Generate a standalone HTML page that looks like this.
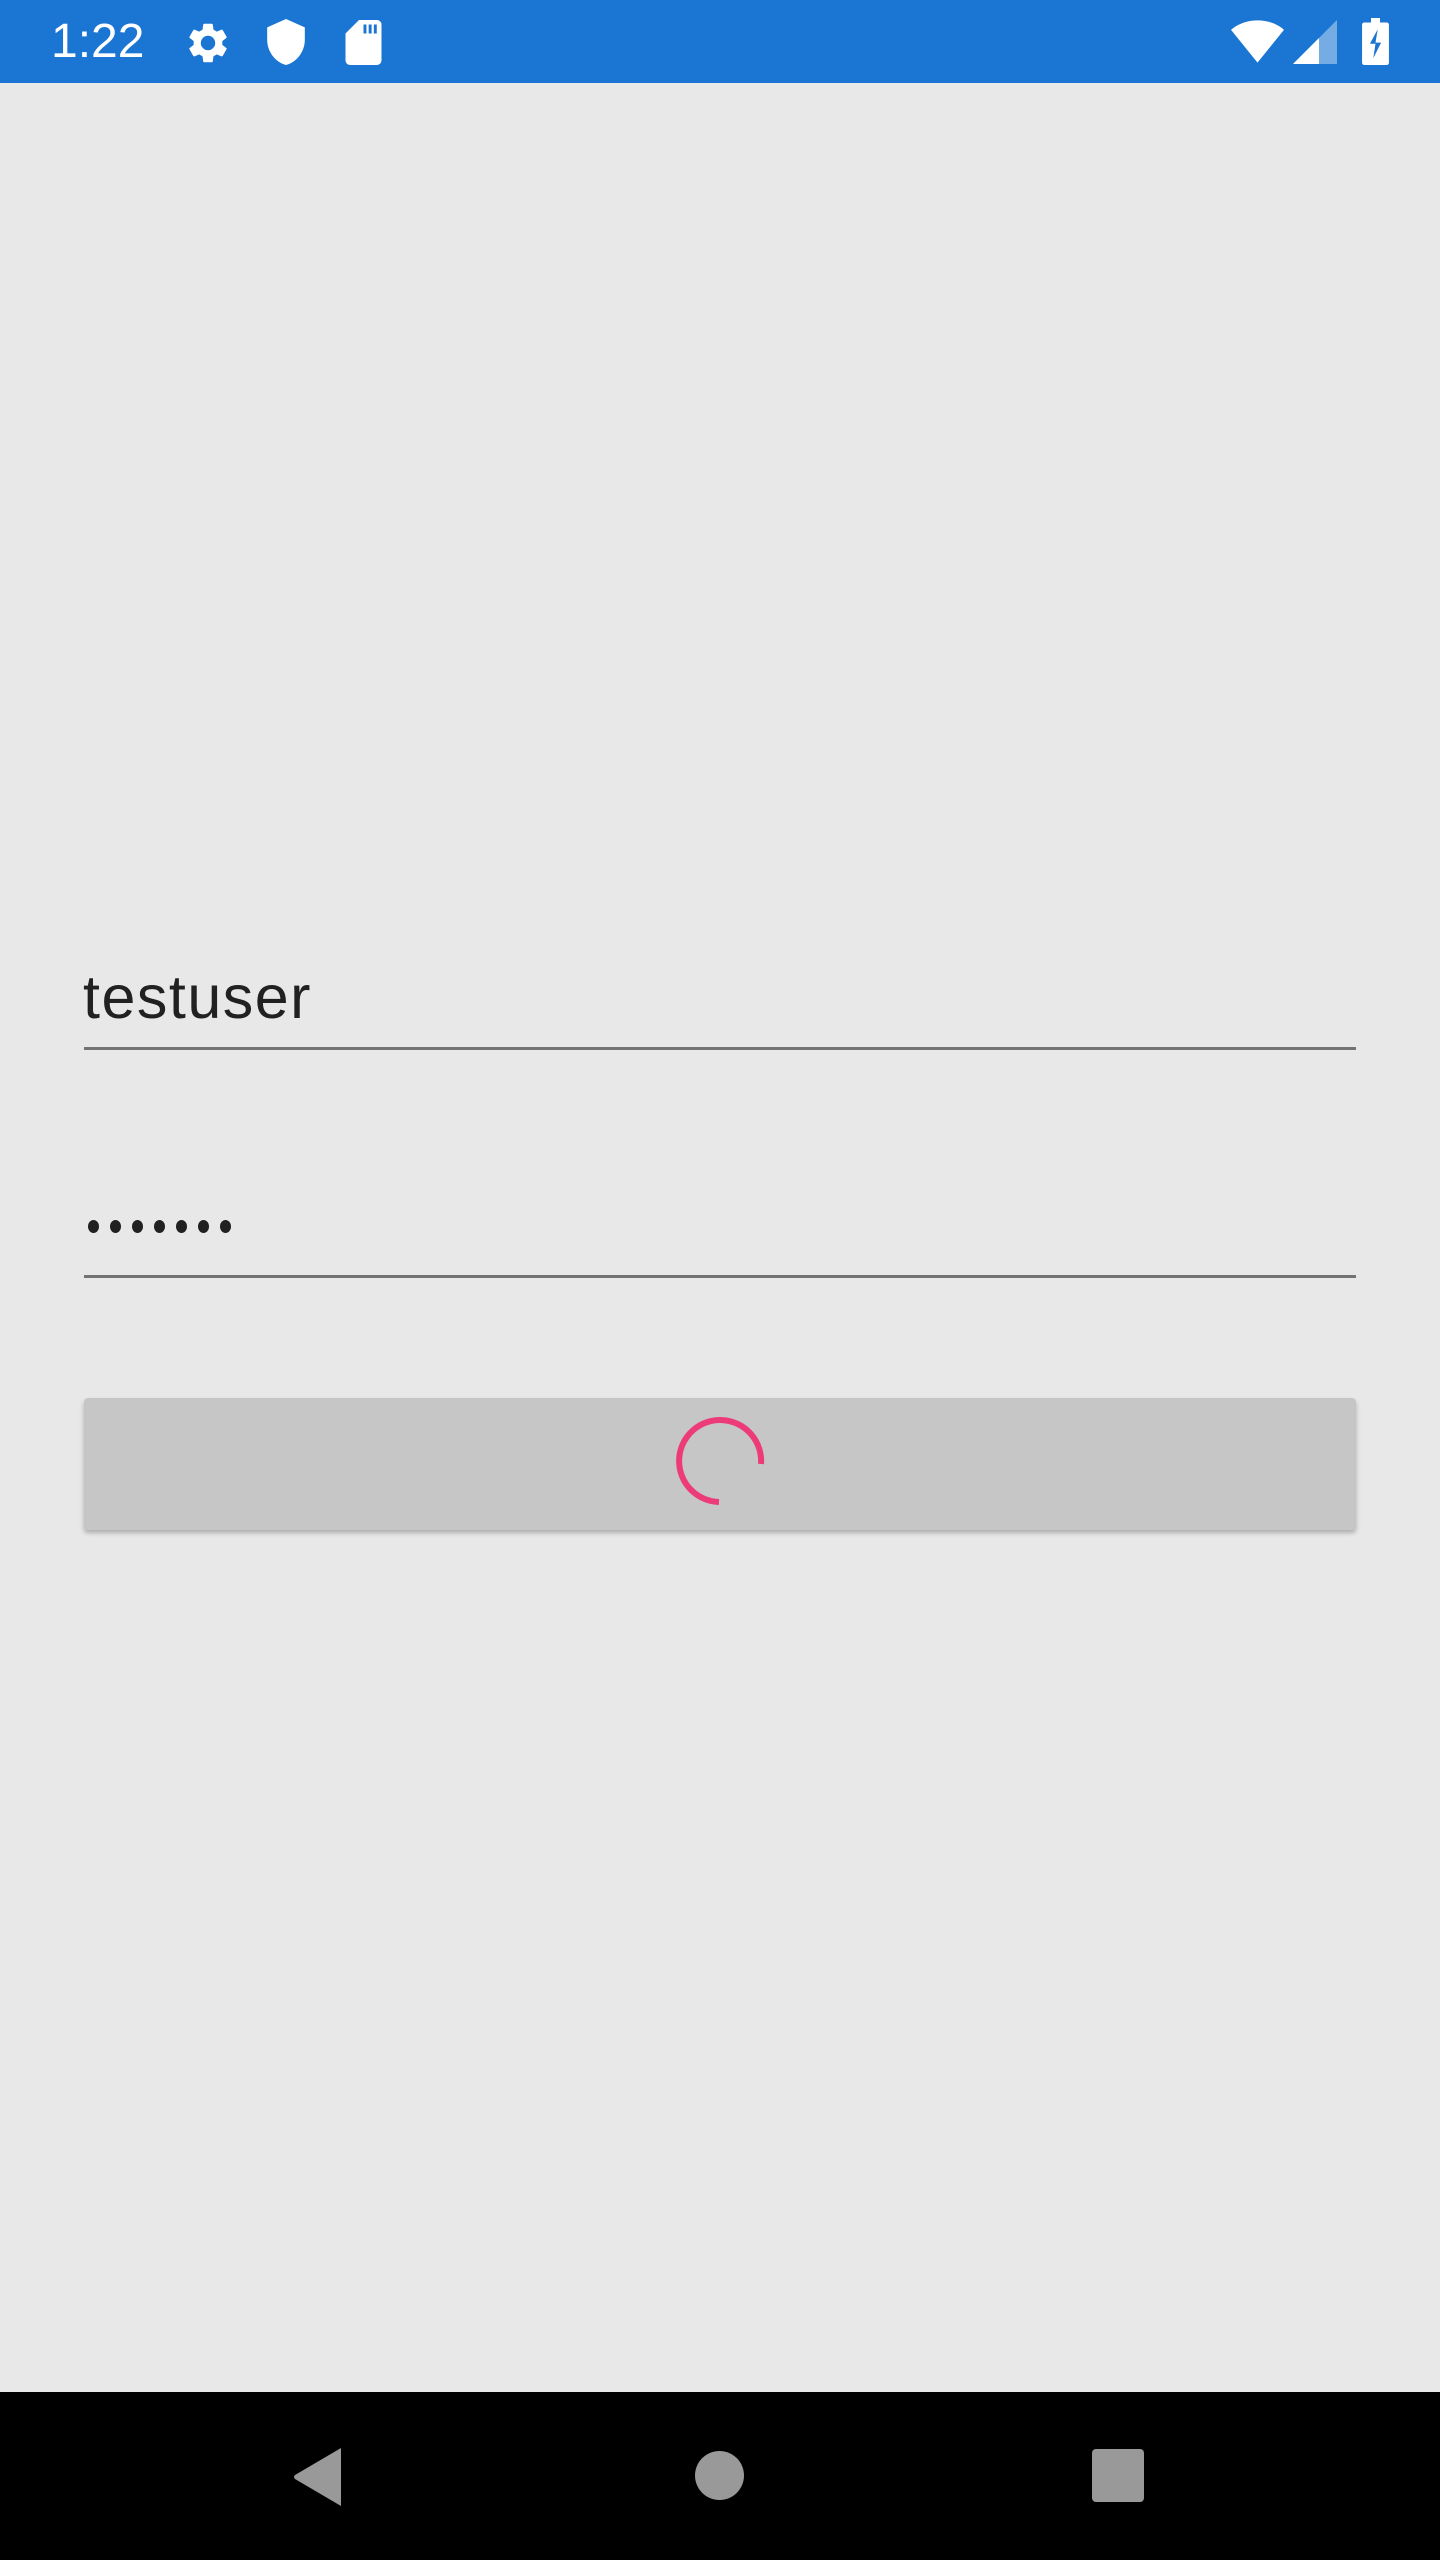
<!DOCTYPE html>
<html><head><meta charset="utf-8"><style>
html,body{margin:0;padding:0}
body{width:1440px;height:2560px;background:#e8e8e8;position:relative;overflow:hidden;font-family:"Liberation Sans",sans-serif}
.sb{position:absolute;left:0;top:0;width:1440px;height:83px;background:#1a76d2}
.abs{position:absolute}
.nav{position:absolute;left:0;top:2392px;width:1440px;height:168px;background:#000}
.d{position:absolute;top:1220px;width:11px;height:13px;border-radius:50%;background:#212121}
</style></head><body>
<div class="sb">
 <div class="abs" style="left:51px;top:12px;color:#fff;font-size:48px;line-height:60px">1:22</div>
 <svg class="abs" style="left:184px;top:19px" width="48" height="48" viewBox="0 0 24 24"><path fill="#fff" d="M19.14 12.94c.04-.3.06-.61.06-.94 0-.32-.02-.64-.07-.94l2.030-1.58a.49.49 0 0 0 .12-.61l-1.92-3.32a.49.49 0 0 0-.59-.22l-2.39.96c-.5-.38-1.03-.7-1.62-.94l-.36-2.540a.48.48 0 0 0-.48-.41h-3.84a.48.48 0 0 0-.47.41l-.36 2.54c-.59.24-1.13.57-1.62.94l-2.39-.96a.48.48 0 0 0-.59.22L2.74 8.87a.47.47 0 0 0 .12.61l2.03 1.58c-.05.3-.09.63-.09.94s.02.64.07.94l-2.03 1.58a.49.49 0 0 0-.12.61l1.92 3.32c.12.22.37.29.59.22l2.39-.96c.5.38 1.03.7 1.62.94l.36 2.54c.05.24.24.41.48.41h3.84c.24 0 .44-.17.47-.41l.36-2.54c.59-.24 1.13-.56 1.62-.94l2.39.96c.22.08.47 0 .59-.22l1.92-3.32a.47.47 0 0 0-.12-.61l-2.01-1.58zM12 15.6A3.6 3.6 0 1 1 12 8.4a3.6 3.6 0 0 1 0 7.2z"/></svg>
 <svg class="abs" style="left:264px;top:19px" width="44" height="46" viewBox="0 0 20 22"><path fill="#fff" d="M10 0L1 4v6c0 5.5 3.8 10.7 9 12 5.2-1.3 9-6.5 9-12V4z"/></svg>
 <svg class="abs" style="left:345px;top:20px" width="37" height="45" viewBox="0 0 16 20"><path fill="#fff" d="M6 0h8a2 2 0 0 1 2 2v16a2 2 0 0 1-2 2H2a2 2 0 0 1-2-2V6zM8 2v4h1.3V2zm2.3 0v4h1.3V2zm2.3 0v4h1.3V2z"/></svg>
 <svg class="abs" style="left:1230px;top:20px" width="55" height="43" viewBox="0 0 26 20"><path fill="#fff" d="M13 20L.5 4.5C2 3 6.5 0 13 0s11 3 12.5 4.5z"/></svg>
 <svg class="abs" style="left:1293px;top:20px" width="44" height="44" viewBox="0 0 22 22"><path fill="#fff" fill-opacity=".4" d="M22 0v22H0z"/><path fill="#fff" d="M13 9v13H0z"/></svg>
 <svg class="abs" style="left:1362px;top:18px" width="27" height="47" viewBox="0 0 12 21"><path fill="#fff" d="M4 0h4v2h3a1 1 0 0 1 1 1v17a1 1 0 0 1-1 1H1a1 1 0 0 1-1-1V3a1 1 0 0 1 1-1h3z"/><path fill="#1a76d2" d="M7 5L3.5 11.5H6L5 18l3.5-7H6z"/></svg>
</div>
<div class="abs" style="left:83px;top:962px;font-size:61px;letter-spacing:1.5px;color:#212121;line-height:70px">testuser</div>
<div class="abs" style="left:84px;top:1047px;width:1272px;height:3px;background:#737373"></div>
<div class="d" style="left:88px"></div><div class="d" style="left:110px"></div><div class="d" style="left:132px"></div><div class="d" style="left:154px"></div><div class="d" style="left:176px"></div><div class="d" style="left:198px"></div><div class="d" style="left:220px"></div>
<div class="abs" style="left:84px;top:1275px;width:1272px;height:3px;background:#737373"></div>
<div class="abs" style="left:84px;top:1398px;width:1272px;height:132px;background:#c5c6c5;border-radius:4px;box-shadow:0 3px 5px rgba(0,0,0,.25)"></div>
<svg class="abs" style="left:672px;top:1414px" width="96" height="96" viewBox="0 0 96 96"><path d="M89 50 A41 41 0 1 0 47 88" fill="none" stroke="#ec3b78" stroke-width="6"/></svg>
<div class="nav">
 <svg class="abs" style="left:292px;top:55px" width="52" height="60" viewBox="0 0 52 60"><path fill="#999" d="M49 1L3 28q-2 2 0 4L49 59z"/></svg>
 <div class="abs" style="left:695px;top:59px;width:49px;height:49px;border-radius:50%;background:#999"></div>
 <div class="abs" style="left:1092px;top:57px;width:52px;height:53px;border-radius:4px;background:#999"></div>
</div>
</body></html>
